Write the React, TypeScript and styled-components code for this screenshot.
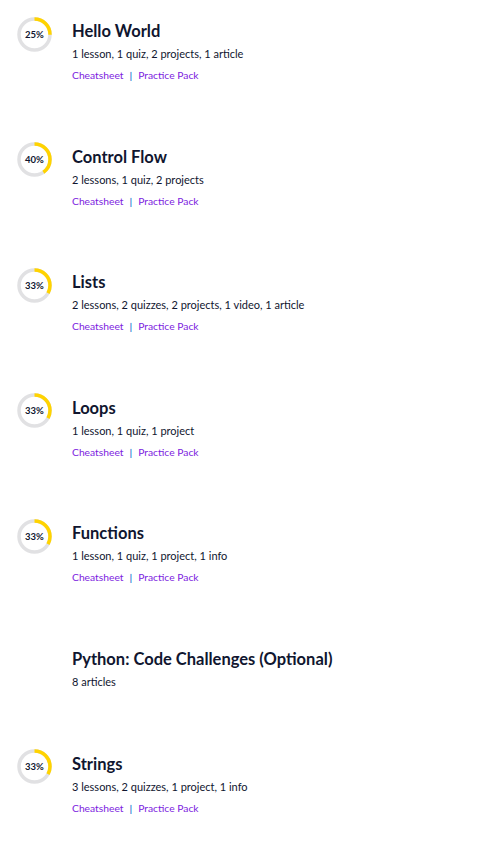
import * as React from "react";
import styled, { createGlobalStyle } from "styled-components";

const GlobalStyle = createGlobalStyle`
  body {
    margin: 0;
    background: #ffffff;
    font-family: Lato, "Liberation Sans", sans-serif;
    color: #10162f;
  }
`;

const Page = styled.div`
  padding: 21px 0 0 17px;
`;

const Module = styled.section<{ $compact?: boolean }>`
  display: flex;
  align-items: flex-start;
  gap: 20px;
  padding-bottom: ${(p) => (p.$compact ? "64px" : "64.5px")};
`;

const RingBox = styled.div`
  position: relative;
  width: 35px;
  height: 35px;
  margin-top: -4.5px;
  flex-shrink: 0;
`;

const RingLabel = styled.span`
  position: absolute;
  inset: 0;
  display: flex;
  align-items: center;
  justify-content: center;
  font-size: 9.5px;
  font-weight: 700;
  color: #10162f;
`;

const Content = styled.div`
  display: flex;
  flex-direction: column;
`;

const Title = styled.h3`
  margin: 0;
  font-size: 16.5px;
  line-height: 20px;
  font-weight: 700;
`;

const Summary = styled.p`
  margin: 5px 0 0;
  font-size: 11px;
  line-height: 16px;
`;

const Links = styled.div`
  display: flex;
  align-items: center;
  gap: 6px;
  margin-top: 6px;
  font-size: 10.3px;
  line-height: 14px;
  height: 14px;
`;

const Link = styled.a`
  color: #7d1de0;
  text-decoration: none;
`;

const Divider = styled.span`
  color: #3a86d4;
  font-weight: 700;
`;

type ModuleType = {
  title: string;
  summary: string;
  percent?: number;
};

const modules: ModuleType[] = [
  { title: "Hello World", summary: "1 lesson, 1 quiz, 2 projects, 1 article", percent: 25 },
  { title: "Control Flow", summary: "2 lessons, 1 quiz, 2 projects", percent: 40 },
  { title: "Lists", summary: "2 lessons, 2 quizzes, 2 projects, 1 video, 1 article", percent: 33 },
  { title: "Loops", summary: "1 lesson, 1 quiz, 1 project", percent: 33 },
  { title: "Functions", summary: "1 lesson, 1 quiz, 1 project, 1 info", percent: 33 },
  { title: "Python: Code Challenges (Optional)", summary: "8 articles" },
  { title: "Strings", summary: "3 lessons, 2 quizzes, 1 project, 1 info", percent: 33 },
];

const Ring: React.FC<{ percent?: number }> = ({ percent }) => {
  if (percent === undefined) return <RingBox />;
  const r = 15.5;
  const c = 2 * Math.PI * r;
  return (
    <RingBox>
      <svg width="35" height="35" viewBox="0 0 35 35">
        <circle cx="17.5" cy="17.5" r={r} fill="none" stroke="#e1e1e3" strokeWidth="3.5" />
        <circle
          cx="17.5"
          cy="17.5"
          r={r}
          fill="none"
          stroke="#ffd300"
          strokeWidth="3.5"
          strokeDasharray={`${(c * percent) / 100} ${c}`}
          transform="rotate(-90 17.5 17.5)"
        />
      </svg>
      <RingLabel>{percent}%</RingLabel>
    </RingBox>
  );
};

const App: React.FC = () => {
  return (
    <Page>
      <GlobalStyle />
      {modules.map((m) => (
        <Module key={m.title} $compact={m.percent === undefined}>
          <Ring percent={m.percent} />
          <Content>
            <Title>{m.title}</Title>
            <Summary>{m.summary}</Summary>
            {m.percent !== undefined && (
              <Links>
                <Link href="#">Cheatsheet</Link>
                <Divider>|</Divider>
                <Link href="#">Practice Pack</Link>
              </Links>
            )}
          </Content>
        </Module>
      ))}
    </Page>
  );
};

export default App;
